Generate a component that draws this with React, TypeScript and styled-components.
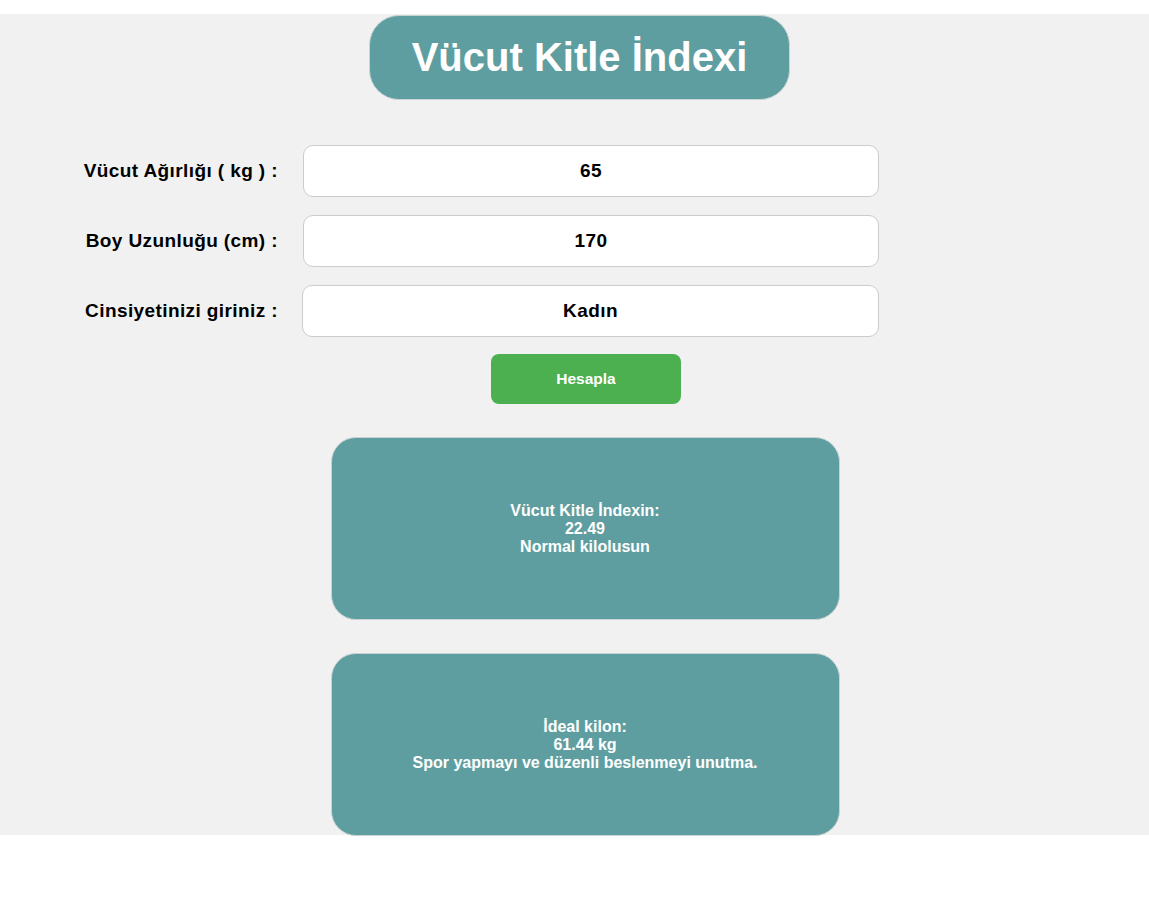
import React from "react";
import styled, { createGlobalStyle } from "styled-components";

const GlobalStyle = createGlobalStyle`
  html, body {
    margin: 0;
    padding: 0;
    background: #ffffff;
    font-family: "Liberation Sans", Arial, sans-serif;
  }
`;

const Page = styled.div`
  padding-top: 14px;
  height: 899px;
  box-sizing: border-box;
`;

const Panel = styled.main`
  background: #f1f1f1;
  display: flex;
  flex-direction: column;
  align-items: center;
`;

const Title = styled.h1`
  margin: 1px 0 0 10px;
  width: 421px;
  height: 85px;
  box-sizing: border-box;
  display: flex;
  align-items: center;
  justify-content: center;
  background: #5f9ea0;
  color: #ffffff;
  border: 1px solid #c9d3d3;
  border-radius: 30px;
  font-size: 40px;
  font-weight: bold;
`;

const Form = styled.div`
  align-self: stretch;
  display: grid;
  grid-template-columns: 278px 576px;
  column-gap: 25px;
  row-gap: 18px;
  margin-top: 45px;
`;

const Label = styled.label`
  text-align: right;
  align-self: center;
  font-size: 19px;
  letter-spacing: 0.4px;
  font-weight: bold;
  color: #000;
`;

const Input = styled.input<{ $shift?: number }>`
  height: 52px;
  box-sizing: border-box;
  margin-left: ${(p) => p.$shift ?? 0}px;
  border: 1px solid #cccccc;
  border-radius: 10px;
  background: #ffffff;
  text-align: center;
  font-family: "Liberation Sans", Arial, sans-serif;
  font-size: 19px;
  letter-spacing: 0.4px;
  font-weight: bold;
  color: #000;
  outline: none;
`;

const Button = styled.button`
  margin: 17px 0 0 23px;
  width: 190px;
  height: 50px;
  border: none;
  border-radius: 8px;
  background: #4caf50;
  color: #ffffff;
  font-family: "Liberation Sans", Arial, sans-serif;
  font-size: 15.5px;
  font-weight: bold;
  cursor: pointer;
`;

const Result = styled.div`
  margin: 33px 0 0 21px;
  width: 509px;
  height: 183px;
  box-sizing: border-box;
  display: flex;
  flex-direction: column;
  align-items: center;
  justify-content: center;
  background: #5f9ea0;
  border: 1px solid #c9d3d3;
  border-radius: 25px;
  color: #ffffff;
  font-size: 16px;
  font-weight: bold;
  line-height: 18px;
  text-align: center;

  &:last-child {
    margin-bottom: -1px;
  }
`;

export default function App() {
  return (
    <>
      <GlobalStyle />
      <Page>
        <Panel>
          <Title>Vücut Kitle İndexi</Title>
          <Form>
            <Label>Vücut Ağırlığı ( kg ) :</Label>
            <Input defaultValue="65" />
            <Label>Boy Uzunluğu (cm) :</Label>
            <Input defaultValue="170" />
            <Label>Cinsiyetinizi giriniz :</Label>
            <Input defaultValue="Kadın" $shift={-1} />
          </Form>
          <Button>Hesapla</Button>
          <Result>
            <span>Vücut Kitle İndexin:</span>
            <span>22.49</span>
            <span>Normal kilolusun</span>
          </Result>
          <Result>
            <span>İdeal kilon:</span>
            <span>61.44 kg</span>
            <span>Spor yapmayı ve düzenli beslenmeyi unutma.</span>
          </Result>
        </Panel>
      </Page>
    </>
  );
}
